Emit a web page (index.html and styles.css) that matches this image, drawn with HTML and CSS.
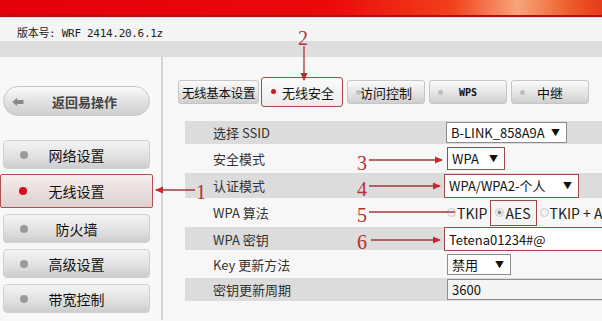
FILE: index.html
```html
<!DOCTYPE html>
<html lang="zh-CN">
<head>
  <meta charset="UTF-8">
  <title>无线安全</title>
  <link rel="stylesheet" href="styles.css">
</head>
<body>
  <div class="page">
    <div class="topbar"></div>
    <div class="verbar">版本号: WRF 2414.20.6.1z</div>
    <div class="band"></div>

    <div class="main">
      <div class="side">
        <div class="back"><span class="back-icon">&#x2B05;</span>返回易操作</div>
        <div class="menu">
          <div class="item"><span class="dot"></span>网络设置</div>
          <div class="item active"><span class="dot"></span>无线设置</div>
          <div class="item"><span class="dot"></span>防火墙</div>
          <div class="item"><span class="dot"></span>高级设置</div>
          <div class="item"><span class="dot"></span>带宽控制</div>
        </div>
      </div>

      <div class="content">
        <div class="tabs">
          <div class="tab plain">无线基本设置</div>
          <div class="tab current"><span class="dot"></span>无线安全</div>
          <div class="tab"><span class="dot"></span>访问控制</div>
          <div class="tab mono"><span class="dot"></span>WPS</div>
          <div class="tab"><span class="dot"></span>中继</div>
        </div>

        <div class="form">
          <div class="row gray r1">
            <div class="label">选择 SSID</div>
            <div class="value"><span class="select w-ssid">B-LINK_858A9A<i>▼</i></span></div>
          </div>
          <div class="row r2">
            <div class="label">安全模式</div>
            <div class="value"><span class="select w-mode mark">WPA<i>▼</i></span></div>
          </div>
          <div class="row gray r3">
            <div class="label">认证模式</div>
            <div class="value"><span class="select w-auth mark">WPA/WPA2-个人<i>▼</i></span></div>
          </div>
          <div class="row r4">
            <div class="label">WPA 算法</div>
            <div class="value radios">
              <span class="radio"><b></b>TKIP</span>
              <span class="radio on mark"><b></b>AES</span>
              <span class="radio"><b></b>TKIP + AES</span>
            </div>
          </div>
          <div class="row gray r5">
            <div class="label">WPA 密钥</div>
            <div class="value"><span class="input w-key mark">Tetena01234#@</span></div>
          </div>
          <div class="row r6">
            <div class="label">Key 更新方法</div>
            <div class="value"><span class="select w-upd">禁用<i>▼</i></span></div>
          </div>
          <div class="row gray r7">
            <div class="label">密钥更新周期</div>
            <div class="value"><span class="input w-period">3600</span></div>
          </div>
        </div>
      </div>
    </div>

    <svg class="notes" width="602" height="321" viewBox="0 0 602 321">
      <defs>
        <marker id="head" markerWidth="8" markerHeight="8" refX="7" refY="4" orient="auto" markerUnits="userSpaceOnUse">
          <path d="M0 0.5 L8 4 L0 7.5 Z" fill="#c8282c"/>
        </marker>
      </defs>
      <g stroke="#a23a3a" stroke-width="1.3" fill="none">
        <line x1="304" y1="46" x2="304" y2="80" marker-end="url(#head)"/>
        <line x1="195" y1="190" x2="156" y2="190" marker-end="url(#head)"/>
        <line x1="369" y1="160" x2="442" y2="160" marker-end="url(#head)"/>
        <line x1="369" y1="186" x2="440" y2="186" marker-end="url(#head)"/>
        <line x1="369" y1="212" x2="455" y2="212"/>
        <line x1="371" y1="240" x2="440" y2="240" marker-end="url(#head)"/>
      </g>
      <g class="num">
        <text x="298" y="45">2</text>
        <text x="196" y="199">1</text>
        <text x="357" y="170">3</text>
        <text x="357" y="196">4</text>
        <text x="357" y="222">5</text>
        <text x="357" y="249">6</text>
      </g>
    </svg>
  </div>
</body>
</html>
```

FILE: styles.css
```css
body {
  margin: 0;
  background: #f6f6f6;
  font-family: "Noto Sans CJK SC", "Liberation Sans", sans-serif;
  color: #2a2a2a;
}

.page {
  position: relative;
  width: 602px;
  height: 321px;
  overflow: hidden;
  background: #f7f7f7;
}

.topbar {
  height: 15px;
  background: linear-gradient(to right, #e4000a 0%, #ea0a0a 55%, #f2401c 75%, #f7a47a 86%, #ee5a2a 95%, #e83a1c 100%);
  border-bottom: 2px solid #a8141a;
}

.verbar {
  height: 24px;
  padding: 6px 0 0 17px;
  box-sizing: border-box;
  background: #f5f4f4;
  border-top: 1px solid #f6d8d8;
  font-family: "DejaVu Sans Mono", "Liberation Mono", "Noto Sans CJK SC", monospace;
  font-size: 11px;
  letter-spacing: -0.3px;
  color: #222;
}

.band {
  height: 16px;
  background: #dedede;
}

.main {
  display: flex;
  height: 263px;
}

/* left menu */
.side {
  width: 163px;
  flex-shrink: 0;
  border-right: 2px solid #d4d4d4;
  background: #f8f8f8;
  padding-top: 29px;
  box-sizing: border-box;
}

.back {
  display: flex;
  align-items: center;
  width: 147px;
  height: 30px;
  margin-left: 3px;
  border-radius: 15px;
  background: linear-gradient(#fafafa, #dedede 60%, #cfcfcf);
  border: 1px solid #c8c8c8;
  box-sizing: border-box;
  font-size: 13px;
  font-weight: bold;
  color: #444;
}

.back-icon {
  width: 40px;
  padding-left: 8px;
  font-size: 12px;
  color: #8a8a8a;
}

.menu {
  display: flex;
  flex-direction: column;
  gap: 6px;
  margin-top: 24px;
}

.item {
  display: flex;
  align-items: center;
  justify-content: center;
  position: relative;
  width: 147px;
  height: 29px;
  margin-left: 3px;
  border-radius: 4px;
  background: linear-gradient(#f4f4f4, #e2e2e2 55%, #cdcdcd);
  border: 1px solid #d0d0d0;
  box-sizing: border-box;
  font-size: 14px;
  color: #111;
}

.item .dot {
  position: absolute;
  left: 16px;
  top: 10px;
  width: 8px;
  height: 8px;
  border-radius: 50%;
  background: #9a9a9a;
}

.item.active {
  height: 34px;
  margin: -1px 0 0 0;
  width: 153px;
  border: 1.5px solid #b05050;
  border-radius: 2px;
  background: linear-gradient(#f8eeee, #e8dcdc 55%, #dcd0d0);
}

.item.active .dot {
  left: 18px;
  top: 12px;
  background: #d6101c;
}

/* tabs */
.content {
  flex: 1;
  padding-top: 23px;
}

.tabs {
  display: flex;
  align-items: center;
  gap: 4px;
  margin-left: 15px;
  height: 24px;
}

.tab {
  position: relative;
  display: flex;
  align-items: center;
  justify-content: center;
  width: 78px;
  height: 24px;
  border-radius: 3px;
  background: linear-gradient(#fafafa, #e4e4e4 55%, #cfcfcf);
  border: 1px solid #c6c6c6;
  box-sizing: border-box;
  font-size: 13px;
  color: #111;
  white-space: nowrap;
}

.tab .dot {
  position: absolute;
  left: 8px;
  top: 9px;
  width: 5px;
  height: 5px;
  border-radius: 50%;
  background: #bdbdbd;
}

.tab.plain {
  width: 81px;
  margin-right: -2px;
  font-size: 12.5px;
  letter-spacing: -0.3px;
}

.tab.current {
  width: 82px;
  height: 30px;
  padding-left: 12px;
  border: 1.5px solid #a94a4a;
  background: linear-gradient(#fbfbfb, #ececec);
}

.tab.current .dot {
  left: 9px;
  top: 11px;
  background: #d01822;
}

.tab.mono {
  font-family: "DejaVu Sans Mono", monospace;
  font-size: 10px;
  font-weight: bold;
}

/* form */
.form {
  margin-top: 17px;
  margin-left: 22px;
}

.row {
  display: grid;
  grid-template-columns: 259px 1fr;
  align-items: center;
  font-size: 13px;
  color: #333;
}

.row.gray {
  background: #dcdcdc;
}

.r1 { height: 23px; }
.r2 { height: 29px; }
.r3 { height: 25px; }
.r4 { height: 29px; }
.r5 { height: 23px; }
.r6 { height: 28px; }
.r7 { height: 23px; }

.label {
  padding-left: 28px;
}

.value {
  display: flex;
  align-items: center;
}

.select,
.input {
  display: flex;
  align-items: center;
  justify-content: space-between;
  height: 21px;
  padding: 0 6px 0 4px;
  box-sizing: border-box;
  background: #fff;
  border: 1px solid #8c8c8c;
  font-size: 13px;
  color: #111;
}

.select i {
  font-style: normal;
  font-size: 9px;
}

.mark {
  border: 1.5px solid #a14848;
}

.w-ssid { width: 121px; margin-left: 2px; }
.w-mode { width: 58px; margin-left: 3px; height: 23px; }
.w-auth { width: 135px; height: 24px; }
.w-key { width: 170px; height: 24px; }
.w-upd { width: 64px; margin-left: 3px; }
.w-period { width: 170px; margin-left: 3px; background: #f4f4f4; }

.radios {
  gap: 3px;
  padding-left: 3px;
}

.radio {
  display: flex;
  align-items: center;
  gap: 1px;
  font-size: 14px;
  color: #222;
  white-space: nowrap;
}

.radio b {
  width: 7px;
  height: 7px;
  border-radius: 50%;
  border: 1px solid #c8c8c8;
  background: #f4f4f4;
}

.radio.on {
  height: 24px;
  padding: 0 5px 0 4px;
  background: #f4f4f4;
}

.radio.on b {
  background: radial-gradient(#8a8a8a 35%, #eee 45%);
}

/* annotations */
.notes {
  position: absolute;
  left: 0;
  top: 0;
}

.num text {
  font-family: "Liberation Serif", serif;
  font-size: 20px;
  fill: #b3312f;
}
```
